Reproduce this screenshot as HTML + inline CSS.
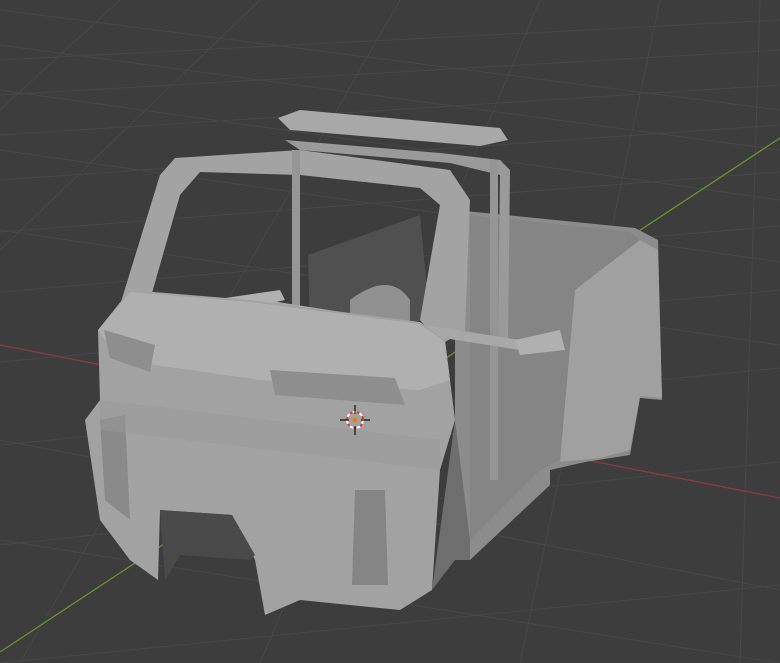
<!DOCTYPE html>
<html><head><meta charset="utf-8"><style>
html,body{margin:0;padding:0;background:#3d3d3d;width:780px;height:663px;overflow:hidden}
svg{display:block}
</style></head><body>
<svg width="780" height="663" viewBox="0 0 780 663" xmlns="http://www.w3.org/2000/svg">
<rect width="780" height="663" fill="#3d3d3d"/>
<g stroke="#474747" stroke-width="1" fill="none">
<path d="M0 60 L780 20 M0 95 L780 50 M0 135 L780 85 M0 180 L780 125 M0 232 L780 172 M0 292 L780 226 M0 362 L780 290 M0 445 L780 368 M0 545 L780 462 M0 663 L780 585"/>
<path d="M0 10 L780 110 M0 45 L780 150 M0 90 L780 200 M0 150 L780 262 M0 230 L780 345 M0 440 L780 590 M0 540 L780 663"/>
<path d="M120 0 L0 110 M260 0 L0 250 M400 0 L20 663 M540 0 L260 663 M660 0 L520 663 M760 0 L740 663"/>
</g>
<line x1="0" y1="345" x2="780" y2="498" stroke="#8a3a3f" stroke-width="1.3"/>
<line x1="0" y1="652" x2="780" y2="138" stroke="#6a8e3a" stroke-width="1.3"/>
<!-- bed -->
<path d="M455 210 L635 228 L658 240 L662 400 L640 398 L630 455 L585 462 L550 470 L550 485 L470 560 L455 560 Z" fill="#8c8c8c"/>
<path d="M470 215 L630 232 L640 240 L575 290 L560 460 L540 470 L470 540 Z" fill="#858585"/>
<path d="M575 290 L640 240 L658 250 L662 398 L640 396 L630 450 L600 458 L560 462 Z" fill="#a0a0a0"/>
<path d="M308 255 L420 215 L430 320 L310 330 Z" fill="#505050"/>
<!-- window frame -->
<path d="M175 158 L300 150 L450 170 L470 200 L465 330 L440 345 L420 320 L440 205 L420 188 L300 175 L200 172 L180 195 L150 300 L120 305 L160 175 Z" fill="#a3a3a3"/>
<path d="M278 118 L300 110 L500 128 L508 140 L480 146 L290 130 Z" fill="#a8a8a8"/>
<path d="M285 140 L440 153 L500 160 L510 170 L508 340 L498 338 L500 175 L450 163 L300 150 Z" fill="#9a9a9a"/>
<rect x="292" y="150" width="8" height="180" fill="#959595"/>
<rect x="490" y="160" width="8" height="320" fill="#959595"/>
<path d="M265 300 L520 340 L520 350 L265 310 Z" fill="#a8a8a8"/>
<path d="M225 298 L280 290 L285 300 L240 310 Z" fill="#b0b0b0"/>
<path d="M515 340 L560 330 L565 350 L520 355 Z" fill="#b0b0b0"/>
<path d="M350 300 Q390 270 410 300 L410 330 L350 325 Z" fill="#909090"/>
<!-- front body -->
<path d="M98 330 L130 290 L250 300 L420 322 L445 340 L455 420 L440 470 L432 590 L400 610 L300 600 L265 615 L255 560 L232 515 L160 510 L158 580 L130 560 L100 520 L85 420 L100 400 Z" fill="#a2a2a2"/>
<path d="M98 330 L130 292 L250 302 L420 324 L445 342 L450 380 L420 390 L260 380 L120 360 Z" fill="#b0b0b0"/>
<path d="M104 330 L155 345 L150 372 L110 358 Z" fill="#8e8e8e"/>
<path d="M270 370 L395 378 L405 405 L275 395 Z" fill="#8e8e8e"/>
<path d="M100 420 L125 415 L130 520 L105 500 Z" fill="#8a8a8a"/>
<path d="M355 490 L385 490 L388 585 L352 585 Z" fill="#858585"/>
<path d="M160 510 L232 515 L255 555 L250 560 L180 555 L165 580 Z" fill="#4a4a4a"/>
<path d="M100 400 L440 440 L440 470 L100 430 Z" fill="#989898" opacity=".5"/>
<path d="M455 420 L470 540 L470 560 L455 560 L432 590 Z" fill="#6e6e6e"/>
<!-- 3D cursor -->
<circle cx="355" cy="420" r="8" fill="none" stroke="#fff" stroke-width="2" stroke-dasharray="4 3"/>
<circle cx="355" cy="420" r="8" fill="none" stroke="#d33" stroke-width="2" stroke-dasharray="3 4" stroke-dashoffset="3"/>
<path d="M355 405 V414 M355 426 V435 M340 420 H349 M361 420 H370" stroke="#111" stroke-width="1.2"/>
<circle cx="355" cy="420" r="2.5" fill="#e08020"/>
</svg>
</body></html>
